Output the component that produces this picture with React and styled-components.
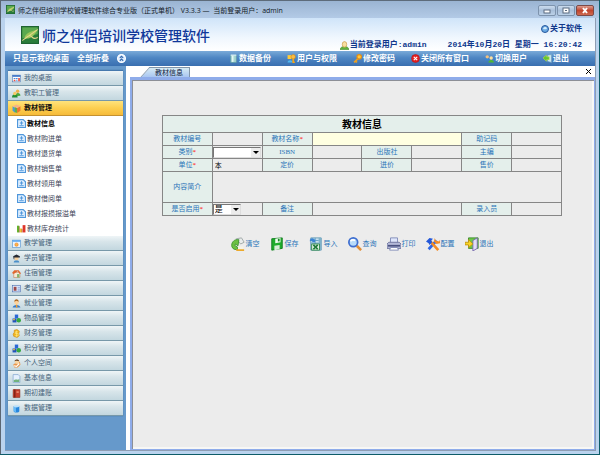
import React, { useState } from "react";
import styled, { createGlobalStyle } from "styled-components";

const GlobalStyle = createGlobalStyle`
  * {
    box-sizing: border-box;
  }

  body {
    margin: 0;
    background: #0d5c68;
    font-family: "Liberation Sans", "Noto Sans CJK SC", sans-serif;
    font-size: 7px;
    line-height: 10px;
  }

  button, input, select, textarea {
    margin: 0;
    padding: 0;
    border: 0;
    border-radius: 0;
    background: none;
    color: inherit;
    font: inherit;
    outline: none;
  }

  a {
    color: inherit;
    text-decoration: none;
  }
`;

const Frame = styled.div`
  display: flex;
  flex-direction: column;
  min-height: calc(100vh - 1px);
  margin-right: 1px;
  padding: 0 3px 3px 4px;
  border-left: 1px solid #5b6672;
  border-top: 1px solid #5d6b7a;
  background: #bad3ee;
`;

const TitleBar = styled.div`
  display: flex;
  align-items: center;
  height: 17px;
  margin: 0 -3px 0 -4px;
  padding: 0 5px;
  background: linear-gradient(#9ab4d2, #b3cae6);
`;

const TitleText = styled.div`
  flex: 1;
  padding: 2px 0 0 3px;
  color: #111a26;
  font-family: "Open Sans", "Noto Sans CJK SC", sans-serif;
  white-space: pre;
`;

const WindowButtons = styled.div`
  display: flex;
  gap: 1px;
  padding-top: 2px;
`;

const WindowButton = styled.button`
  display: flex;
  align-items: center;
  justify-content: center;
  width: 18px;
  height: 11px;
  border: 1px solid ${(p) => (p.$close ? "#7c4a48" : "#7d93ad")};
  border-radius: 2px;
  background: ${(p) =>
    p.$close
      ? "linear-gradient(#dd9d90, #c0442e 50%, #cf6a50)"
      : "linear-gradient(#cbdbed, #a8bfda 50%, #bcd1e8)"};
`;

const Inner = styled.div`
  display: flex;
  flex: 1;
  flex-direction: column;
  border-right: 1px solid #8e9db3;
  border-bottom: 1px solid #8e9db3;
  background: #fff;
`;

const Header = styled.header`
  display: flex;
  justify-content: space-between;
  height: 33px;
  padding: 0 13px 0 16px;
  background: linear-gradient(#cfe4f9, #f0f7fe 60%, #fff);
`;

const Brand = styled.h1`
  display: flex;
  align-items: center;
  gap: 3px;
  margin: 0;
  color: #10389a;
  font-family: "Noto Sans CJK SC", sans-serif;
  font-size: 14px;
  font-weight: 500;
  line-height: 18px;
`;

const HeaderInfo = styled.div`
  display: flex;
  flex-direction: column;
  align-items: flex-end;
  justify-content: space-between;
  padding: 6px 0 1px;
  color: #10388c;
  font-family: "Liberation Mono", "Noto Sans CJK SC", monospace;
  font-size: 8px;
  font-weight: bold;
`;

const InfoLine = styled.div`
  display: flex;
  align-items: center;
  gap: 1px;
  white-space: pre;
`;

const Clock = styled.time`
  padding-left: 20px;
`;

const AboutButton = styled.button`
  display: flex;
  align-items: center;
  gap: 1px;
`;

const Toolbar = styled.nav`
  display: flex;
  align-items: center;
  gap: 16px;
  height: 15px;
  padding: 0 26px 0 8px;
  background: linear-gradient(#7aaad8, #4e86c3 45%, #3a6fb0);
  color: #fff;
  font-size: 8px;
  font-weight: bold;
`;

const ToolbarLeft = styled.div`
  display: flex;
  flex: 1;
  gap: 8px;
`;

const ToolButton = styled.button`
  display: flex;
  align-items: center;
  gap: 1px;
  white-space: nowrap;
`;

const Body = styled.div`
  display: flex;
  flex: 1;
`;

const Sidebar = styled.aside`
  width: 121px;
  padding: 4px 3px;
  background: #6699cb;
`;

const Menu = styled.div`
  border-top: 1px solid #4679ad;
  box-shadow: 0 0 1px #3f6c9b;
  background: #fff;
`;

const GroupButton = styled.button`
  display: flex;
  align-items: center;
  gap: 3px;
  width: 100%;
  height: 15px;
  padding-left: 4px;
  border-bottom: 1px solid ${(p) => (p.$open ? "#c49130" : "#7798a9")};
  background: ${(p) =>
    p.$open
      ? "linear-gradient(#ffe37c, #fdcf50 50%, #f6bb3a)"
      : "linear-gradient(#eff5f7, #d8e5ea 40%, #c3d7df)"};
  color: ${(p) => (p.$open ? "#111" : "#46637a")};
  font-weight: ${(p) => (p.$open ? "bold" : "normal")};
`;

const SubItem = styled.a`
  display: flex;
  align-items: center;
  gap: 1px;
  height: 15px;
  padding-left: 9px;
  color: ${(p) => (p.$active ? "#000" : "#3d4558")};
  font-weight: ${(p) => (p.$active ? "bold" : "normal")};
`;

const Main = styled.main`
  display: flex;
  flex: 1;
  flex-direction: column;
  min-width: 0;
  margin-left: 4px;
`;

const TabBar = styled.div`
  display: flex;
  align-items: flex-end;
  height: 11px;
  padding: 0 1px 0 3px;
  background: #fff;
`;

const TabButton = styled.button`
  position: relative;
  z-index: 0;
  height: 10px;
  margin-left: 17px;
  padding: 0 6px 0 5px;
  border: 1px solid #8296aa;
  border-width: 1px 1px 0 0;
  background: linear-gradient(#d6ebf4, #a9c6f1);
  color: #10203a;

  &::before {
    content: "";
    position: absolute;
    z-index: -1;
    top: -1px;
    bottom: 0;
    left: -5px;
    width: 12px;
    border: 1px solid #8296aa;
    border-width: 1px 0 0 1px;
    background: linear-gradient(#d6ebf4, #a9c6f1);
    transform: skewX(-42deg);
  }
`;

const CloseTab = styled.button`
  display: flex;
  margin-left: auto;
  padding: 3px;
`;

const Panel = styled.section`
  flex: 1;
  padding: 35px 2px 0 0;
  border: solid #8facea;
  border-width: 3px 1px 1px 2px;
  background: #ececec;
  box-shadow: inset 1px 1px 0 #8c8f96, inset -2px -2px 0 #f7f7f5;
`;

const FormTable = styled.table`
  width: 87%;
  margin: 0 auto;
  border-collapse: collapse;
  table-layout: fixed;

  caption {
    height: 17px;
    border: 1px solid #868686;
    border-bottom: 0;
    background: #e4efeb;
    color: #000;
    font-size: 10px;
    font-weight: bold;
    line-height: 17px;
  }
`;

const Row = styled.tr`
  height: ${(p) => (p.$tall ? 31 : 13)}px;
`;

const Label = styled.th`
  padding: 0;
  border: 1px solid #868686;
  background: #e4efeb;
  color: #2a74b8;
  font-family: "Liberation Serif", "Noto Sans CJK SC", serif;
  font-weight: normal;

  em {
    color: #f00;
    font-style: normal;
  }
`;

const Cell = styled.td`
  padding: 0;
  border: 1px solid #868686;
  background: ${(p) => (p.$focus ? "#ffffe1" : "transparent")};
  line-height: 0;
`;

const TextInput = styled.input`
  width: 100%;
  height: 11px;
  padding-left: 2px;
  color: #000;
  line-height: 11px;
`;

const TextArea = styled.textarea`
  display: block;
  width: 100%;
  height: 28px;
  padding: 2px;
  resize: none;
`;

const SelectBox = styled.div`
  display: grid;
  align-items: center;
  width: ${(p) => (p.$short ? "28px" : "calc(100% - 1px)")};
  height: 11px;
  border: 1px solid #777;
  border-right-color: #ddd;
  border-bottom-color: #ddd;
  background: #fff;

  select {
    grid-area: 1 / 1;
    width: 100%;
    height: 9px;
    padding-left: 1px;
    appearance: none;
    color: #000;
    font-size: 8px;
    line-height: 9px;
  }

  svg {
    grid-area: 1 / 1;
    justify-self: end;
    pointer-events: none;
  }
`;

const Actions = styled.div`
  display: flex;
  justify-content: center;
  gap: 10px;
  padding-top: 21px;
`;

const ActionButton = styled.button`
  display: flex;
  align-items: center;
  gap: 1px;
  color: #2a74b8;
  white-space: nowrap;
`;

// every drawing sits on a 16 x 16 grid
const drawings = {
  logo: (
    <>
      <rect width="16" height="16" fill="#2a7d3b" />
      <path d="M1 1h14v6L1 11z" fill="#5aa94f" />
      <path d="M3 11C4 6 8 5 15 3C12 8 9 12 3 11z" fill="#9cc65a" />
      <path d="M1 13L15 3M4 11c3-3 4-3 6-1s3 1 5 0" fill="none" stroke="#e4d68b" />
      <rect x=".5" y=".5" width="15" height="15" fill="none" stroke="#1e6432" />
    </>
  ),
  globe: (
    <>
      <circle cx="8" cy="8" r="7" fill="#69a9e3" stroke="#27569c" strokeWidth="2" />
      <path d="M4 8c2-5 6-5 8-1c-2 2-5 2-8 1z" fill="#d4ecfb" />
    </>
  ),
  user: (
    <>
      <path d="M0 15c0-3 3-4 5-5h6c2 1 5 2 5 5z" fill="#62b33b" stroke="#35831f" />
      <ellipse cx="8" cy="6" rx="4" ry="5" fill="#f8dfa0" stroke="#c08a32" />
    </>
  ),
  collapse: (
    <>
      <circle cx="8" cy="8" r="7" fill="#dcecff" stroke="#fff" strokeWidth="2" />
      <path d="M5 7l3-3 3 3M5 12l3-3 3 3" fill="none" stroke="#3268ac" strokeWidth="2" />
    </>
  ),
  backup: (
    <>
      <path d="M3 2h10v13H3z" fill="#a5d5d0" stroke="#5c9fa0" />
      <path d="M5 3h3v11H5z" fill="#e3f7f4" />
      <path d="M3 2h10" stroke="#e7f7ff" strokeWidth="2" />
    </>
  ),
  rights: (
    <>
      <path d="M1 2h7v7H1z" fill="#ffcb3a" />
      <circle cx="11" cy="5" r="4" fill="#f8bd45" stroke="#d58512" />
      <path d="M1 15c0-5 9-5 9 0z" fill="#51b9f1" />
      <path d="M11 8v7h3" fill="none" stroke="#f3a51b" strokeWidth="3" />
    </>
  ),
  key: (
    <>
      <path d="M9 8l-7 7M4 12l3 3" stroke="#f0a01c" strokeWidth="3" />
      <circle cx="11" cy="5" r="4" fill="#ffc93d" stroke="#e88e12" strokeWidth="2" />
    </>
  ),
  closeAll: (
    <>
      <circle cx="8" cy="8" r="7" fill="#e52222" stroke="#b80d12" />
      <path d="M5 5l6 6M11 5l-6 6" stroke="#fff" strokeWidth="2" />
    </>
  ),
  people: (
    <>
      <path d="M0 11c0-5 8-5 8 0z" fill="#3488da" />
      <circle cx="4" cy="5" r="3" fill="#f2c180" />
      <path d="M6 15c0-6 10-6 10 0z" fill="#4db933" />
      <circle cx="11" cy="7" r="3" fill="#ffdf9c" />
    </>
  ),
  leave: (
    <>
      <path d="M8 2l7-1v14l-7-2z" fill="#cfe8f2" stroke="#6d9dbb" />
      <path d="M0 7l6-5v3h5v5H6v3z" fill="#62c832" stroke="#c6e03a" />
    </>
  ),
  desk: (
    <>
      <rect x="1" y="2" width="14" height="12" fill="#fff" stroke="#4774b3" />
      <path d="M1 2h14v3H1z" fill="#3a73c8" />
      <path d="M3 7h3v2H3zM7 7h3v2H7z" fill="#4a89dc" />
      <path d="M11 7h3v6h-3zM3 10h3v3H3z" fill="#e65346" />
      <path d="M7 10h3v3H7z" fill="#8ab9e8" />
    </>
  ),
  staff: (
    <>
      <path d="M5 13c0-7 10-8 10-1z" fill="#4da83d" />
      <circle cx="10" cy="4" r="3" fill="#eeb04b" />
      <path d="M0 15c0-8 10-7 10 0z" fill="#248e35" />
      <circle cx="5" cy="8" r="3" fill="#f5ca66" />
    </>
  ),
  books: (
    <>
      <path d="M1 4l5 3v9l-5-4z" fill="#4c9bd3" />
      <path d="M5 5l4 2v9l-4-2z" fill="#64ae46" />
      <path d="M9 7l6-3v8l-6 4z" fill="#ed7334" />
      <path d="M1 4l7-3 7 3-6 3z" fill="#f6b28a" />
    </>
  ),
  doc: (
    <>
      <path d="M1 1h10l4 4v10H1z" fill="#e1f0ff" stroke="#4f97dc" strokeWidth="2" />
      <path d="M8 4v6M5 7h6M4 12h8" stroke="#4f97dc" strokeWidth="2" />
    </>
  ),
  chart: (
    <>
      <path d="M0 3h4v12H0z" fill="#62b52c" />
      <path d="M5 8h4v7H5z" fill="#f2c33a" />
      <path d="M10 2h5v13h-5z" fill="#df3529" />
      <path d="M4 4v11M9 9v6" stroke="#a03a1c" />
    </>
  ),
  teach: (
    <>
      <rect x="1" y="2" width="14" height="13" fill="#eaf5ff" stroke="#478bce" />
      <path d="M1 2h14v3H1z" fill="#62aaf0" />
      <circle cx="8" cy="10" r="3" fill="#ffb545" stroke="#e47b25" />
    </>
  ),
  student: (
    <>
      <path d="M3 15c0-5 10-5 10 0z" fill="#4b8fc9" />
      <circle cx="8" cy="7" r="4" fill="#f6cf9b" />
      <path d="M2 4l6-3 6 3v2H4v4L3 9z" fill="#252a33" />
    </>
  ),
  house: (
    <>
      <path d="M3 6h11v9H3z" fill="#f5ead8" stroke="#c1764a" />
      <path d="M0 7l4-5h8l4 6-2 1-4-5-7 5z" fill="#e1672f" />
      <path d="M9 9h4v6H9z" fill="#83b46c" />
    </>
  ),
  idCard: (
    <>
      <rect x="1" y="3" width="14" height="11" fill="#dfe9fb" stroke="#4667ac" />
      <path d="M3 5h5v7H3z" fill="#9b4949" />
      <path d="M10 6h4M10 9h4M10 11h4" stroke="#5d7fc2" />
    </>
  ),
  job: (
    <>
      <path d="M1 15c1-6 13-6 14 0z" fill="#327bcd" />
      <circle cx="8" cy="6" r="4" fill="#ffd39a" />
      <path d="M4 5c0-6 8-6 8 0l-4-2z" fill="#a9641f" />
      <path d="M7 10h2l1 5H7z" fill="#f19a27" />
    </>
  ),
  blocks: (
    <>
      <path d="M5 1h6v7H5z" fill="#2a68d5" />
      <path d="M1 8h7v7H1z" fill="#1f54bd" />
      <circle cx="12" cy="11" r="4" fill="#36a843" />
      <path d="M2 9h3v2H2z" fill="#f7c130" />
    </>
  ),
  money: (
    <>
      <path d="M4 2l5-1 4 3-1 4 1 4-4 3-6-2-1-4 2-3z" fill="#f1b21d" stroke="#c7860c" />
      <path d="M11 5H6v3h5v4H5M8 3v11" fill="none" stroke="#fff08a" />
    </>
  ),
  personal: (
    <>
      <path d="M2 10c3-3 9-3 12-5l1 5-5 5H4z" fill="#e9964a" />
      <circle cx="9" cy="5" r="4" fill="#fbd6a3" />
      <path d="M4 4c2-4 8-4 9 0l-5-1z" fill="#62422a" />
      <path d="M3 12l5 1 5-5" fill="none" stroke="#fff" strokeWidth="2" />
    </>
  ),
  page: (
    <>
      <path d="M2 1h9l3 3v11H2z" fill="#e6f1fe" stroke="#6a94c5" />
      <path d="M3 11c4-3 7 1 10-2v5H3z" fill="#72b37e" />
    </>
  ),
  ledger: (
    <>
      <path d="M2 1h12v14H2z" fill="#c63e2b" stroke="#872718" />
      <path d="M5 1v14" stroke="#6f1d12" strokeWidth="2" />
      <path d="M8 4h4v3H8z" fill="#e9886d" />
    </>
  ),
  data: (
    <>
      <path d="M3 4h10v9c0 3-10 3-10 0z" fill="#2786dc" />
      <path d="M3 4h4v11l-4-2z" fill="#66baf7" />
      <ellipse cx="8" cy="4" rx="5" ry="2" fill="#b9e0fb" />
    </>
  ),
  clear: (
    <>
      <path d="M6 2l6-1 3 5-4 2z" fill="#e9ecec" stroke="#9aa3a3" />
      <path d="M7 3C3 3 0 7 1 11c1 3 4 4 7 3l-1-3c-2 0-3-1-2-3l3 2 1-7z" fill="#6cc043" stroke="#3d9430" />
      <path d="M8 11h6v3H8z" fill="#f7f3e6" />
      <path d="M6 15h9" stroke="#ecaa2d" strokeWidth="2" />
    </>
  ),
  save: (
    <>
      <path d="M2 2l12-1v12L2 15z" fill="#1fac2c" stroke="#0e7c1b" />
      <path d="M6 2l6-1v5L6 7z" fill="#eefbee" />
      <path d="M5 10l6-1v5l-6 1z" fill="#d8eed8" />
      <path d="M9 2h2v3H9z" fill="#148b22" />
    </>
  ),
  excel: (
    <>
      <path d="M2 1h12v14H2z" fill="#c9e2ee" stroke="#6298b5" />
      <path d="M11 1h3v14h-3z" fill="#7fb2c9" />
      <path d="M2 4h9M2 7h9M7 1v7" stroke="#5f9cc2" />
      <path d="M3 8h9v7H3z" fill="#e3f3e4" stroke="#2d8746" />
      <path d="M5 9l5 5M10 9l-5 5" stroke="#1f7a38" strokeWidth="2" />
      <path d="M1 3c2-2 4-2 5 0l1-1v4H3l1-1c-1-1-2-1-3 0z" fill="#3b84d3" />
    </>
  ),
  search: (
    <>
      <path d="M10 10l5 5" stroke="#e08f3a" strokeWidth="3" />
      <circle cx="6" cy="6" r="5" fill="#b9dcfb" stroke="#3f6fd0" strokeWidth="2" />
      <path d="M3 5c1-2 3-2 5-1" fill="none" stroke="#fff" strokeWidth="2" />
    </>
  ),
  print: (
    <>
      <path d="M4 1h8v6H4z" fill="#dfe6fb" stroke="#7c86b4" />
      <path d="M2 6h12l2 2v5H0V8z" fill="#b4b9d8" stroke="#6a7099" />
      <path d="M1 10h14" stroke="#4a5180" strokeWidth="2" />
      <path d="M4 12h8l1 3H3z" fill="#fff" stroke="#7c86b4" />
    </>
  ),
  tools: (
    <>
      <path d="M12 4L3 14" stroke="#2f66e4" strokeWidth="3" />
      <path d="M5 5l9 10" stroke="#f48b24" strokeWidth="3" />
      <path d="M0 5l4-4 4 1-2 2 1 2-3 3-1-2z" fill="#2458d9" />
      <path d="M10 1l1 3 4 1 1-2v4l-4 1-3-3z" fill="#f48b24" />
    </>
  ),
  exit: (
    <>
      <path d="M4 1h11v12H4z" fill="#6dc947" stroke="#37862b" />
      <path d="M9 4l5-3v12l-5 3z" fill="#e1dcf7" stroke="#7467ac" />
      <path d="M0 6h4V3l5 5-5 4V9H0z" fill="#fbd425" stroke="#bc9314" />
    </>
  ),
};

const Icon = ({ name, size = 9 }) => (
  <svg width={size} height={size} viewBox="0 0 16 16" aria-hidden="true">
    {drawings[name]}
  </svg>
);

const groups = [
  { icon: "desk", text: "我的桌面" },
  { icon: "staff", text: "教职工管理" },
  {
    icon: "books",
    text: "教材管理",
    items: [
      "教材信息",
      "教材购进单",
      "教材退货单",
      "教材销售单",
      "教材领用单",
      "教材借阅单",
      "教材报损报溢单",
      "教材库存统计",
    ],
  },
  { icon: "teach", text: "教学管理" },
  { icon: "student", text: "学员管理" },
  { icon: "house", text: "住宿管理" },
  { icon: "idCard", text: "考证管理" },
  { icon: "job", text: "就业管理" },
  { icon: "blocks", text: "物品管理" },
  { icon: "money", text: "财务管理" },
  { icon: "blocks", text: "积分管理" },
  { icon: "personal", text: "个人空间" },
  { icon: "page", text: "基本信息" },
  { icon: "ledger", text: "期初建账" },
  { icon: "data", text: "数据管理" },
];

const tools = [
  ["backup", "数据备份"],
  ["rights", "用户与权限"],
  ["key", "修改密码"],
  ["closeAll", "关闭所有窗口"],
  ["people", "切换用户"],
  ["leave", "退出"],
];

const actions = [
  ["clear", "清空"],
  ["save", "保存"],
  ["excel", "导入"],
  ["search", "查询"],
  ["print", "打印"],
  ["tools", "配置"],
  ["exit", "退出"],
];

const Field = ({ id, label, required, span, focus, value, children }) => (
  <>
    <Label scope="row">
      <label htmlFor={id}>
        {label}
        {required && <em>*</em>}
      </label>
    </Label>
    <Cell colSpan={span} $focus={focus}>
      {children || <TextInput id={id} defaultValue={value} autoFocus={focus} />}
    </Cell>
  </>
);

const Select = ({ id, options, short }) => (
  <SelectBox $short={short}>
    <select id={id}>
      {options.map((o) => (
        <option key={o}>{o}</option>
      ))}
    </select>
    <svg width="9" height="9" viewBox="0 0 9 9">
      <path d="M0 0h9v9H0z" fill="#ececec" />
      <path d="M2 3h6L5 6z" fill="#000" />
    </svg>
  </SelectBox>
);

const SideMenu = () => {
  const [open, setOpen] = useState("教材管理");

  return (
    <Sidebar>
      <Menu>
        {groups.map((g) => (
          <React.Fragment key={g.text}>
            <GroupButton
              $open={open === g.text}
              aria-expanded={open === g.text}
              onClick={() => setOpen(g.text)}
            >
              <Icon name={g.icon} />
              {g.text}
            </GroupButton>
            {open === g.text &&
              g.items?.map((item, i) => (
                <SubItem key={item} href="#" $active={i === 0}>
                  <Icon name={item === "教材库存统计" ? "chart" : "doc"} />
                  {item}
                </SubItem>
              ))}
          </React.Fragment>
        ))}
      </Menu>
    </Sidebar>
  );
};

const BookForm = () => (
  <FormTable>
    <caption>教材信息</caption>
    <tbody>
      <Row>
        <Field id="code" label="教材编号" />
        <Field id="name" label="教材名称" required span={3} focus />
        <Field id="mnemonic" label="助记码" />
      </Row>
      <Row>
        <Field id="kind" label="类别" required>
          <Select id="kind" options={[""]} />
        </Field>
        <Field id="isbn" label="ISBN" />
        <Field id="press" label="出版社" />
        <Field id="editor" label="主编" />
      </Row>
      <Row>
        <Field id="unit" label="单位" required value="本" />
        <Field id="price" label="定价" />
        <Field id="cost" label="进价" />
        <Field id="sale" label="售价" />
      </Row>
      <Row $tall>
        <Field id="summary" label="内容简介" span={7}>
          <TextArea id="summary" />
        </Field>
      </Row>
      <Row>
        <Field id="enabled" label="是否启用" required>
          <Select id="enabled" options={["是", "否"]} short />
        </Field>
        <Field id="remark" label="备注" span={3} />
        <Field id="operator" label="录入员" />
      </Row>
    </tbody>
  </FormTable>
);

const App = () => {
  return (
    <>
      <GlobalStyle />
      <Frame>
        <TitleBar>
          <Icon name="logo" />
          <TitleText>
            师之伴侣培训学校管理软件综合专业版（正式单机） V3.3.3 —  当前登录用户：admin
          </TitleText>
          <WindowButtons>
            <WindowButton aria-label="最小化">
              <svg width="8" height="7">
                <rect x="1" y="3" width="6" height="3" fill="#fff" stroke="#5b6b80" />
              </svg>
            </WindowButton>
            <WindowButton aria-label="最大化">
              <svg width="8" height="7">
                <rect x="1" y="1" width="6" height="5" fill="#fff" stroke="#5b6b80" />
                <rect x="3" y="3" width="2" height="1" fill="#5b6b80" />
              </svg>
            </WindowButton>
            <WindowButton $close aria-label="关闭">
              <svg width="8" height="7">
                <path d="M2 1l4 5M6 1L2 6" stroke="#fff" strokeWidth="2" />
              </svg>
            </WindowButton>
          </WindowButtons>
        </TitleBar>
        <Inner>
          <Header>
            <Brand>
              <Icon name="logo" size={18} />
              师之伴侣培训学校管理软件
            </Brand>
            <HeaderInfo>
              <AboutButton>
                <Icon name="globe" size={8} />
                关于软件
              </AboutButton>
              <InfoLine>
                <Icon name="user" />
                当前登录用户:admin
                <Clock>2014年10月20日 星期一 16:20:42</Clock>
              </InfoLine>
            </HeaderInfo>
          </Header>
          <Toolbar>
            <ToolbarLeft>
              <ToolButton>只显示我的桌面</ToolButton>
              <ToolButton>全部折叠</ToolButton>
              <ToolButton aria-label="收起">
                <Icon name="collapse" />
              </ToolButton>
            </ToolbarLeft>
            {tools.map(([icon, text]) => (
              <ToolButton key={text}>
                <Icon name={icon} />
                {text}
              </ToolButton>
            ))}
          </Toolbar>
          <Body>
            <SideMenu />
            <Main>
              <TabBar>
                <TabButton>教材信息</TabButton>
                <CloseTab aria-label="关闭标签">
                  <svg width="5" height="5">
                    <path d="M0 0l5 5M5 0L0 5" stroke="#000" />
                  </svg>
                </CloseTab>
              </TabBar>
              <Panel>
                <BookForm />
                <Actions>
                  {actions.map(([icon, text]) => (
                    <ActionButton key={text}>
                      <Icon name={icon} size={14} />
                      {text}
                    </ActionButton>
                  ))}
                </Actions>
              </Panel>
            </Main>
          </Body>
        </Inner>
      </Frame>
    </>
  );
};

export default App;
